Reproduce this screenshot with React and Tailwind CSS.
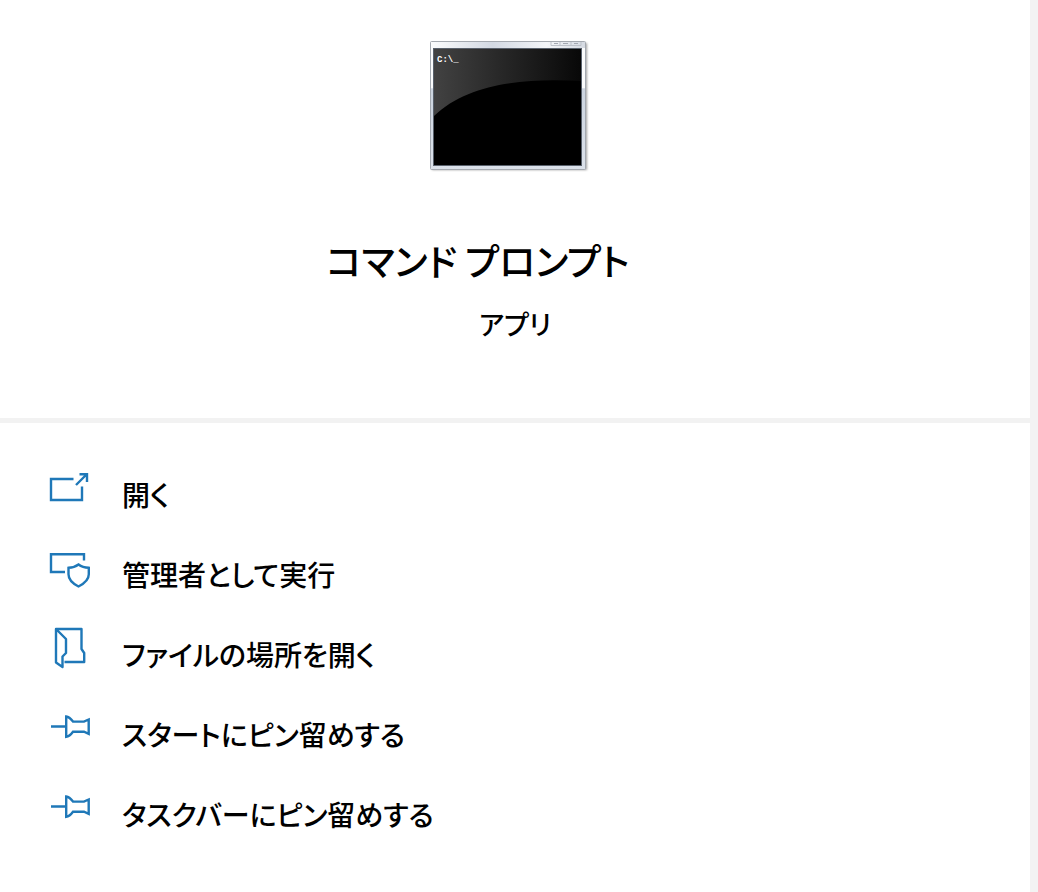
import React from "react";

function ConsoleIcon() {
  return (
    <svg className="box-content pr-3" width="164" height="136" viewBox="0 0 164 136" aria-hidden="true">
      <defs>
        <linearGradient id="bar" x1="0" x2="1">
          <stop offset="0" stopColor="#fbfcfd" />
          <stop offset="0.4" stopColor="#d3d9e3" />
          <stop offset="0.75" stopColor="#f3f5f8" />
          <stop offset="1" stopColor="#d5dae2" />
        </linearGradient>
        <linearGradient id="side" x1="0" y1="0" x2="0" y2="1">
          <stop offset="0.36" stopColor="#fafbfc" />
          <stop offset="0.37" stopColor="#ccd4df" />
          <stop offset="1" stopColor="#dbe1ea" />
        </linearGradient>
        <linearGradient id="gloss" x1="0" x2="1">
          <stop offset="0" stopColor="#424242" />
          <stop offset="0.55" stopColor="#222222" />
          <stop offset="1" stopColor="#080808" />
        </linearGradient>
        <filter id="shadow" x="-5%" y="-5%" width="112%" height="112%">
          <feGaussianBlur stdDeviation="1.2" />
        </filter>
      </defs>
      <rect x="5" y="5" width="155" height="127" fill="#a0a0a0" filter="url(#shadow)" />
      <rect x="3.5" y="3.5" width="155" height="128" rx="1" fill="url(#side)" stroke="#a4a9b0" />
      <rect x="4" y="4" width="154" height="6" fill="url(#bar)" />
      <path d="M124 4v3.5h30V4M133 4v3M144 4v3" fill="none" stroke="#bcc1c9" />
      <path d="M127 5.500h4M136 5.500h5M147 5.500h4" stroke="#a3a8b1" />
      <rect x="6.500" y="10.500" width="148" height="117" fill="#000" stroke="#59616c" />
      <path d="M7 11h147v32C102 40 42 44 7 78z" fill="url(#gloss)" />
      <text x="10" y="24" fill="#fff" fontSize="9" fontWeight="700" fontFamily="'Liberation Mono', monospace">C:\_</text>
    </svg>
  );
}

function ActionIcon({ children }) {
  return (
    <svg
      className="mt-2.5 shrink-0"
      width="44"
      height="44"
      viewBox="0 0 44 44"
      fill="none"
      stroke="#1f78b8"
      strokeWidth="2.4"
      aria-hidden="true"
    >
      {children}
    </svg>
  );
}

const open = (
  <>
    <path d="M25.500 13H3v21h31V20.500" />
    <path d="M28 19L38.500 8.500M31.500 8.200H39V16" />
  </>
);

const shield = (
  <>
    <path d="M17 26H3V8.200h33v6.300" />
    <path d="M30.500 18.500c-3 2.300-6 3.200-10 3.300v6.500c0 5.300 4 9.200 10 12.200c6-3 10.300-6.900 10.300-12.200v-6.500c-4-.1-7.300-1-10.300-3.300z" />
  </>
);

const folder = (
  <path
    strokeLinejoin="round"
    d="M16.500 36H36.200V27l-2.700-4V3H8v33.500l6.500 4.500V30.500L18 27V13L8 3"
  />
);

const pin = (
  <path d="M3 20.500h15M18.200 10.500v20.300c2.500-.3 4.500-2 6.800-5.100h11l4.700 2.100V13.500l-4.700 2.100H25c-2.300-3-4.300-4.800-6.800-5.100z" />
);

const actions = [
  { label: "開く", icon: open },
  { label: "管理者として実行", icon: shield },
  { label: "ファイルの場所を開く", icon: folder },
  { label: "スタートにピン留めする", icon: pin },
  { label: "タスクバーにピン留めする", icon: pin },
];

export default function App() {
  return (
    <div className="flex min-h-screen bg-white font-['Noto_Sans_CJK_JP',sans-serif] font-medium text-black [font-feature-settings:'palt']">
      <main className="min-w-0 flex-1">
        <header className="flex flex-col items-center border-b-5 border-[#f2f2f2] pt-[38px] pb-[70px]">
          <ConsoleIcon />
          <h1 className="mt-14 pr-[74px] text-[37px] leading-[60px]">コマンド プロンプト</h1>
          <p className="mt-2.5 text-[27px] leading-12">アプリ</p>
        </header>
        <ul className="pt-[33px]">
          {actions.map(({ label, icon }) => (
            <li key={label}>
              <button type="button" className="flex h-20 w-full items-start pl-12 text-left">
                <ActionIcon>{icon}</ActionIcon>
                <span className="pl-[30px] text-[28px] leading-[76px]">{label}</span>
              </button>
            </li>
          ))}
        </ul>
      </main>
      <div className="w-2 shrink-0 bg-[#f3f3f3]" />
    </div>
  );
}
